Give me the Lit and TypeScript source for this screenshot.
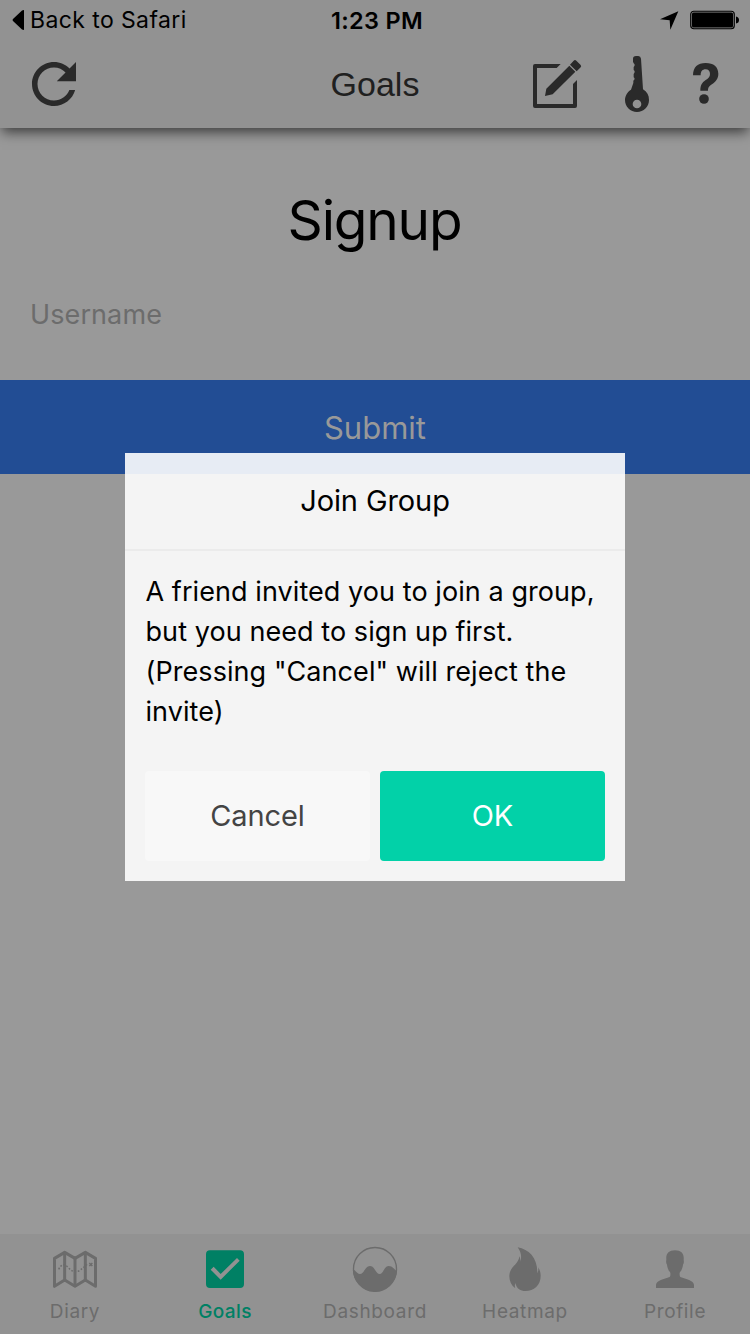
import { LitElement, html, css, svg } from "lit";
import { customElement } from "lit/decorators.js";

const tabs = [
  {
    label: "Diary", key: "diary", box: "156 78 138 138",
    icon: svg`<g fill="none" stroke="currentColor" stroke-width="9" stroke-linejoin="round">
      <path d="M163.500 115L194 97L225 115L256 97L286.500 115V199L256 180L225 199L194 180L163.500 199Z"/>
      <path d="M194 97V180M225 115V200M256 97V180"/>
      <path d="M176 148Q188 124 204 142T236 153Q250 144 256 137L265 131" stroke-width="4.5" stroke-dasharray="5 5"/>
      <path d="M268 129L277 138M277 129L268 138" stroke-width="4.5"/></g>`,
  },
  {
    label: "Goals", key: "goals", box: "606 78 138 138",
    icon: svg`<path fill-rule="evenodd" fill="currentColor" d="M630 91H720Q732 91 732 103V192Q732 204 720 204H630Q618 204 618 192V103Q618 91 630 91ZM641 140L632 149L662 179L719 122L711 114L662 162Z"/>`,
  },
  {
    label: "Dashboard", key: "dashboard", box: "186 78 138 138",
    icon: svg`<circle cx="255" cy="147" r="64.5" fill="none" stroke="currentColor" stroke-width="4"/>
      <path fill="currentColor" d="M189 147C198 153 203 162 210 162C222 162 226 138 240 138C254 138 257 162 269 162C280 162 283 138 296 138C308 138 313 149 321 153A66 66 0 0 1 189 147Z"/>`,
  },
  {
    label: "Heatmap", key: "heatmap", box: "126 78 138 138",
    icon: svg`<path fill="currentColor" d="M173 82C207 88 233 114 232 160C235 154 236 148 234 142C240 150 242 158 242 168C242 196 222 213 196 213C182 213 170 207 166 189C164 195 164 199 166 205C154 197 148 184 148 169C148 139 176 135 178 109C181 115 182 121 180 127C186 113 184 97 173 82Z"/>`,
  },
  {
    label: "Profile", key: "profile", box: "576 78 138 138",
    icon: svg`<path fill="currentColor" d="M588 204V195C589 180 612 178 629 171Q632 169 631 158C625 151 622 143 621 134C618 130 618 124 619 120C617 101 626 91 645 91C664 91 673 101 671 120C672 124 672 130 669 134C668 143 665 151 659 158Q658 169 661 171C678 178 701 180 702 195V204Z"/>`,
  },
];

@customElement("app-root")
export class AppRoot extends LitElement {
  static styles = css`
    :host { display: block; font-family: Inter, "Liberation Sans", sans-serif; color: #000; }
    * { box-sizing: border-box; }
    svg { display: block; }
    .screen { position: relative; width: 750px; height: 1334px; overflow: hidden; background: #999; display: flex; flex-direction: column; }
    .head { height: 128px; flex: none; background: #929292; box-shadow: 0 6px 12px -2px rgba(0, 0, 0, 0.62); display: flex; flex-direction: column; }
    .status { height: 40px; display: grid; grid-template-columns: 1fr auto 1fr; align-items: center; padding: 0 11px 0 12px; font-size: 23px; line-height: 38px; }
    .back { display: flex; align-items: center; gap: 6px; letter-spacing: 0.4px; }
    .time { font-weight: 600; font-size: 23.5px; letter-spacing: 0.35px; padding: 1px 0 0 3px; }
    .state { display: flex; justify-content: flex-end; align-items: center; gap: 11px; }
    .nav { height: 88px; display: grid; grid-template-columns: 1fr auto 1fr; align-items: center; padding: 0 31px 0 22px; color: #2a2a2a; }
    .title { font: 34px/88px "Liberation Sans", sans-serif; color: #202020; padding-left: 9px; }
    .actions { display: flex; justify-content: flex-end; align-items: center; }
    .key { margin-left: 42px; }
    .help { margin: 0 0 2px 42px; }
    .main { flex: 1; display: flex; flex-direction: column; }
    .heading { font-size: 55px; line-height: 70px; text-align: center; margin: 57px 0 0; padding-right: 1px; font-weight: 400; letter-spacing: -1.2px; }
    .field { height: 130px; padding: 0 30px; font-size: 27px; line-height: 130px; color: #6c6c6c; margin-top: -5px; letter-spacing: 0.1px; }
    .submit { height: 94px; background: #224d94; color: #999; text-align: center; font-size: 31px; line-height: 96px; }
    .tabs { height: 100px; flex: none; background: #929292; display: grid; grid-template-columns: repeat(5, 1fr); }
    .tab { display: flex; flex-direction: column; align-items: center; padding-top: 12px; color: #6c6c6c; font-size: 19px; line-height: 24px; letter-spacing: 0.65px; }
    .tab svg { margin-bottom: 8px; }
    .goals { color: #008064; font-weight: 500; letter-spacing: 0.4px; }
    .dialog { position: absolute; left: 125px; top: 453px; width: 500px; height: 428px; background: rgba(255, 255, 255, 0.895); }
    .dialog-title { height: 98px; border-bottom: 2px solid #ebebeb; text-align: center; font-size: 29px; line-height: 96px; letter-spacing: -0.1px; }
    .message { padding: 21px 20px 0 20.5px; height: 180px; font-size: 27px; line-height: 40px; white-space: nowrap; letter-spacing: 0.07px; }
    .buttons { display: grid; grid-template-columns: 1fr 1fr; gap: 10px; padding: 40px 20px 20px; }
    .btn { height: 90px; border-radius: 4px; text-align: center; font-size: 29px; line-height: 90px; letter-spacing: -0.1px; background: #f8f8f8; color: #444; }
    .ok { background: #02d1a8; color: #fff; }
  `;

  render() {
    return html`<div class="screen">
      <header class="head">
        <div class="status">
          <div class="back"><svg width="12" height="22" viewBox="0 0 12 22"><path d="M12 1V21L10 20.5L1 12Q0 11 1 10L10 1.5Z"/></svg><span>Back to Safari</span></div>
          <div class="time">1:23 PM</div>
          <div class="state">
            <svg width="19" height="19" viewBox="450 35 57 57"><path d="M505 36L481 91L479 63L450 60Z"/></svg>
            <svg width="49" height="20" viewBox="0 0 49 20"><rect x="0.75" y="1.25" width="43.5" height="17.5" rx="3" fill="none" stroke="#000" stroke-width="1.2"/><rect x="2" y="2.5" width="41" height="15" rx="1.5"/><path d="M46 6.5Q49 7 49 10T46 13.5Z"/></svg>
          </div>
        </div>
        <div class="nav">
          <svg width="64" height="64" viewBox="0 0 512 512"><path fill="currentColor" d="M256 388c-72.597 0-132-59.405-132-132 0-72.601 59.403-132 132-132 36.3 0 69.299 15.4 92.406 39.601L278 234h154V80l-51.698 51.702C348.406 99.798 304.406 80 256 80c-96.797 0-176 79.203-176 176s78.094 176 176 176c81.045 0 148.287-54.134 169.401-128H378.85c-18.745 49.561-67.138 84-122.85 84z"/></svg>
          <div class="title">Goals</div>
          <div class="actions">
            <svg width="50" height="50" viewBox="66 177 150 150"><path fill="currentColor" d="M152 192L140 204H81V312H189V252L201 240V318Q201 324 195 324H75Q69 324 69 318V198Q69 192 75 192ZM105 288L109 266L178 197L196 215L128 283ZM180 194L191 182Q195 178 199 182L212 195Q215 199 212 202L200 214Z"/></svg>
            <svg class="key" width="26" height="58" viewBox="342 165 78 174"><path fill="currentColor" fill-rule="evenodd" d="M369 176Q369 168 378 168H385Q392 168 393 176L399 268C411 275 417 286 417 300C417 320 401 336 381 336S345 320 345 300C345 287 353 275 363 269L370 249V242Q377 237 371 232V222Q377 215 371 210V201Q377 195 371 190L369 185ZM381 299A13 13 0 1 0 381 325A13 13 0 1 0 381 299Z"/></svg>
            <svg class="help" width="27" height="43" viewBox="546 186 81 129"><path fill="currentColor" d="M549 226C549 201 563 189 587 189C611 189 625 201 625 221C625 237 616 245 607 252C597 259 594 263 594 272H571C571 256 576 248 586 241C595 235 600 231 600 222C600 213 595 208 587 208C577 208 572 214 572 226Z"/><circle cx="582" cy="297" r="14.5" fill="currentColor"/></svg>
          </div>
        </div>
      </header>
      <main class="main">
        <h1 class="heading">Signup</h1>
        <div class="field">Username</div>
        <div class="submit">Submit</div>
      </main>
      <nav class="tabs">
        ${tabs.map((t) => html`<div class="tab ${t.key}"><svg width="46" height="46" viewBox=${t.box}>${t.icon}</svg><span>${t.label}</span></div>`)}
      </nav>
      <section class="dialog">
        <div class="dialog-title">Join Group</div>
        <div class="message">A friend invited you to join a group,<br>but you need to sign up first.<br>(Pressing "Cancel" will reject the<br>invite)</div>
        <div class="buttons"><div class="btn">Cancel</div><div class="btn ok">OK</div></div>
      </section>
    </div>`;
  }
}
